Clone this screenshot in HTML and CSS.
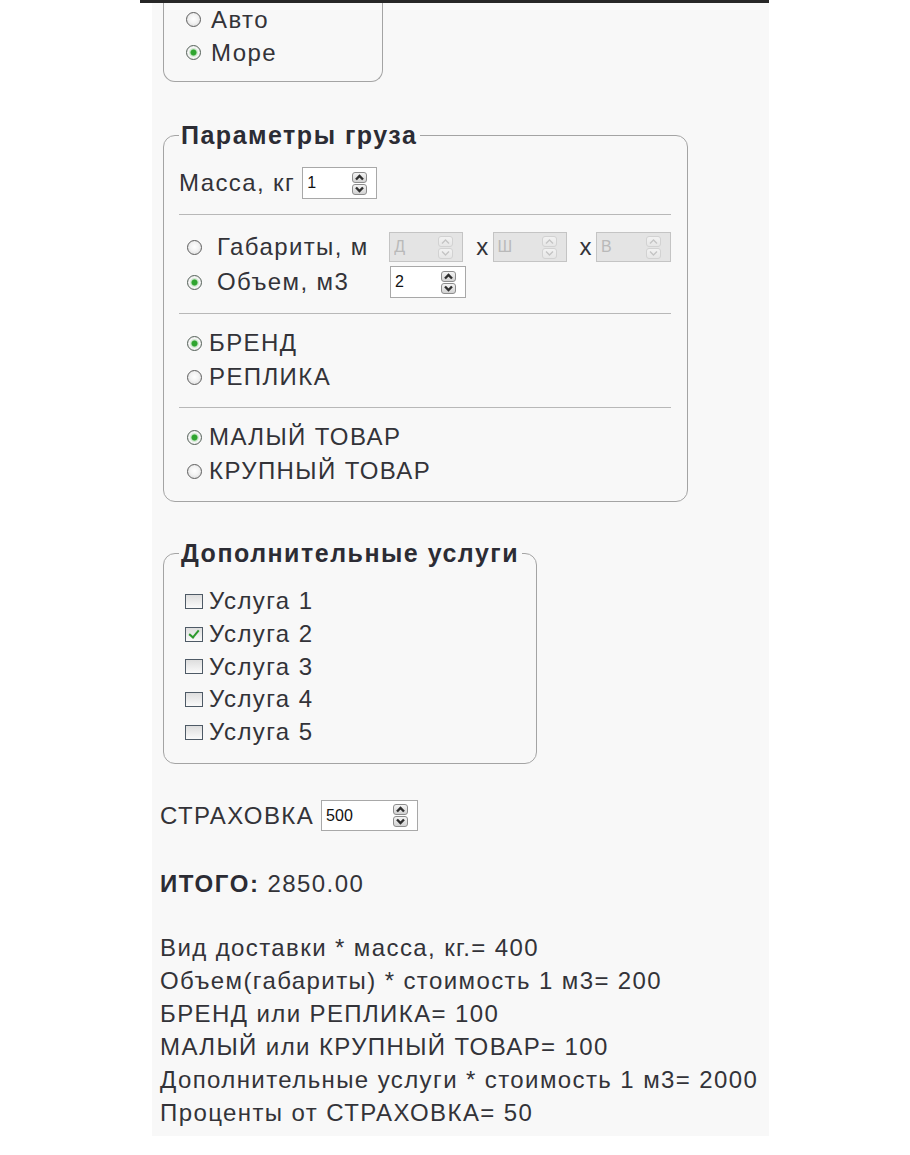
FILE: index.html
```html
<!DOCTYPE html>
<html lang="ru">
<head>
<meta charset="utf-8">
<title>Калькулятор доставки</title>
<link rel="stylesheet" href="styles.css">
</head>
<body>
<div class="frame">
  <div class="page">
    <fieldset class="fs fs-delivery">
      <label class="opt"><input type="radio" name="delivery" class="rb"><span>Авто</span></label>
      <label class="opt"><input type="radio" name="delivery" class="rb" checked><span>Море</span></label>
    </fieldset>

    <fieldset class="fs fs-cargo">
      <legend>Параметры груза</legend>
      <div class="sec sec-mass">
        <label class="row">Масса, кг
          <span class="num w75"><input type="text" value="1"><span class="spin"><span class="sb"><svg viewBox="0 0 13 9"><polyline points="3,6.5 6.5,3 10,6.5"/></svg></span><span class="sb"><svg viewBox="0 0 13 9"><polyline points="3,2.5 6.5,6 10,2.5"/></svg></span></span></span>
        </label>
      </div>
      <hr>
      <div class="sec sec-dims">
        <div class="dim-row r1">
          <label class="opt dim-label"><input type="radio" name="vol" class="rb"><span>Габариты, м</span></label>
          <span class="num dis w74"><input type="text" placeholder="Д" disabled><span class="spin"><span class="sb"><svg viewBox="0 0 13 9"><polyline points="3,6.5 6.5,3 10,6.5"/></svg></span><span class="sb"><svg viewBox="0 0 13 9"><polyline points="3,2.5 6.5,6 10,2.5"/></svg></span></span></span>
          <span class="x">x</span>
          <span class="num dis w74"><input type="text" placeholder="Ш" disabled><span class="spin"><span class="sb"><svg viewBox="0 0 13 9"><polyline points="3,6.5 6.5,3 10,6.5"/></svg></span><span class="sb"><svg viewBox="0 0 13 9"><polyline points="3,2.5 6.5,6 10,2.5"/></svg></span></span></span>
          <span class="x">x</span>
          <span class="num dis w75"><input type="text" placeholder="В" disabled><span class="spin"><span class="sb"><svg viewBox="0 0 13 9"><polyline points="3,6.5 6.5,3 10,6.5"/></svg></span><span class="sb"><svg viewBox="0 0 13 9"><polyline points="3,2.5 6.5,6 10,2.5"/></svg></span></span></span>
        </div>
        <div class="dim-row r2">
          <label class="opt dim-label"><input type="radio" name="vol" class="rb" checked><span>Объем, м3</span></label>
          <span class="num w76"><input type="text" value="2"><span class="spin"><span class="sb"><svg viewBox="0 0 13 9"><polyline points="3,6.5 6.5,3 10,6.5"/></svg></span><span class="sb"><svg viewBox="0 0 13 9"><polyline points="3,2.5 6.5,6 10,2.5"/></svg></span></span></span>
        </div>
      </div>
      <hr>
      <div class="sec sec-opts">
        <label class="opt"><input type="radio" name="brand" class="rb" checked><span>БРЕНД</span></label>
        <label class="opt"><input type="radio" name="brand" class="rb"><span>РЕПЛИКА</span></label>
      </div>
      <hr>
      <div class="sec sec-opts last">
        <label class="opt"><input type="radio" name="size" class="rb" checked><span>МАЛЫЙ ТОВАР</span></label>
        <label class="opt"><input type="radio" name="size" class="rb"><span>КРУПНЫЙ ТОВАР</span></label>
      </div>
    </fieldset>

    <fieldset class="fs fs-services">
      <legend>Дополнительные услуги</legend>
      <div class="sec sec-svc">
        <label class="opt"><input type="checkbox" class="cb"><span>Услуга 1</span></label>
        <label class="opt"><input type="checkbox" class="cb" checked><span>Услуга 2</span></label>
        <label class="opt"><input type="checkbox" class="cb"><span>Услуга 3</span></label>
        <label class="opt"><input type="checkbox" class="cb"><span>Услуга 4</span></label>
        <label class="opt"><input type="checkbox" class="cb"><span>Услуга 5</span></label>
      </div>
    </fieldset>

    <label class="row insurance">СТРАХОВКА
      <span class="num w97"><input type="text" value="500"><span class="spin"><span class="sb"><svg viewBox="0 0 13 9"><polyline points="3,6.5 6.5,3 10,6.5"/></svg></span><span class="sb"><svg viewBox="0 0 13 9"><polyline points="3,2.5 6.5,6 10,2.5"/></svg></span></span></span>
    </label>

    <p class="total"><b>ИТОГО:</b> 2850.00</p>

    <div class="breakdown">
      <div>Вид доставки * масса, кг.= 400</div>
      <div>Объем(габариты) * стоимость 1 м3= 200</div>
      <div>БРЕНД или РЕПЛИКА= 100</div>
      <div>МАЛЫЙ или КРУПНЫЙ ТОВАР= 100</div>
      <div>Дополнительные услуги * стоимость 1 м3= 2000</div>
      <div>Проценты от СТРАХОВКА= 50</div>
    </div>
  </div>
</div>
</body>
</html>
```

FILE: styles.css
```css
* { box-sizing: border-box; }

body {
  margin: 0;
  background: #ffffff;
  font-family: "Liberation Sans", Arial, sans-serif;
  color: #333338;
}

.frame {
  margin-left: 140px;
  width: 629px;
  border-top: 3px solid #262626;
}

.page {
  margin-left: 12px;
  background: #f8f8f8;
  padding: 0 8px 7px 8px;
  font-size: 24px;
  letter-spacing: 1.4px;
}

/* fieldsets */
.fs {
  margin: 0 3px;
  padding: 0 16px 0 15px;
  border: 1px solid #a4a4a4;
  border-radius: 12px;
  min-width: 0;
}

.fs legend {
  font-weight: bold;
  font-size: 25px;
  letter-spacing: 1.5px;
  line-height: 28px;
  padding: 0 3px 0 2px;
  white-space: nowrap;
  color: #2c2c34;
}

.fs-delivery {
  width: 220px;
  border-top: 0;
  border-radius: 0 0 12px 12px;
  padding-bottom: 12px;
}

.fs-delivery .opt { height: 33px; gap: 10px; }
.fs-delivery .rb { margin-left: 7px; }

.fs-cargo { width: 525px; margin-top: 39px; }
.fs-services { width: 374px; margin-top: 37px; padding-right: 8px; }

hr {
  margin: 0;
  border: 0;
  border-top: 1px solid #b8b8b8;
}

.sec-mass { padding: 18px 0 15px; }
.sec-dims { padding: 17px 0 15px; display: flex; flex-direction: column; gap: 4px; }
.sec-opts { padding: 12px 0 13px; }
.sec-svc { padding: 18px 0 15px; }

/* rows & options */
.row {
  display: flex;
  align-items: center;
  gap: 7px;
}

.opt {
  display: flex;
  align-items: center;
  gap: 7px;
  height: 34px;
}

.sec-svc .opt { height: 32.7px; gap: 6px; }

.rb {
  appearance: none;
  -webkit-appearance: none;
  margin: 0 0 0 8px;
  width: 15px;
  height: 15px;
  flex: none;
  border: 1.5px solid #5e5e5e;
  border-radius: 50%;
  background: radial-gradient(circle at 50% 45%, #ffffff 0, #f3f3f3 45%, #d2d2d2 100%);
}

.rb:checked {
  border-color: #56625a;
  background: radial-gradient(circle, #2fa52f 0 2.6px, #bfe3bf 3.4px, #f6f6f6 5px, #d8d8d8 100%);
}

.cb {
  appearance: none;
  -webkit-appearance: none;
  margin: 0 0 0 6px;
  width: 18px;
  height: 15px;
  flex: none;
  border: 1.5px solid #4e5a66;
  background: linear-gradient(#dedede, #fafafa);
  display: grid;
  place-content: center;
}

.cb:checked::before {
  content: "";
  width: 4px;
  height: 8px;
  margin-top: -2px;
  border-right: 2px solid #2e9a2e;
  border-bottom: 2px solid #2e9a2e;
  transform: rotate(40deg);
}

/* dimensions */
.dim-row { display: flex; align-items: center; }
.dim-row.r1 { height: 30px; }
.dim-row.r2 { height: 32px; }
.dim-label { width: 211px; gap: 15px; height: auto; }
.x { margin: 0 3px 0 13px; }

/* number inputs with spinner */
.num {
  display: inline-flex;
  align-items: center;
  height: 32px;
  border: 1px solid #a8a8a8;
  background: #ffffff;
  padding-right: 9px;
  letter-spacing: 0;
}

.dim-row .num { height: 30px; }
.dim-row.r2 .num { height: 32px; }
.insurance .num { height: 31px; }

.w74 { width: 74px; }
.w75 { width: 75px; }
.w76 { width: 76px; }
.w97 { width: 97px; }

.num input {
  flex: 1;
  min-width: 0;
  border: 0;
  background: transparent;
  font-family: "Liberation Sans", Arial, sans-serif;
  font-size: 16px;
  color: #111;
  padding: 0 0 0 4px;
  outline: none;
}

.num input::placeholder { color: #b9b9b9; }

.spin {
  display: flex;
  flex-direction: column;
  gap: 1px;
  flex: none;
}

.sb {
  display: block;
  width: 15px;
  height: 11px;
  border: 1px solid #8d8d8d;
  border-radius: 3px;
  background: linear-gradient(#f4f4f4, #d2d2d2);
}

.sb svg {
  display: block;
  width: 13px;
  height: 9px;
}

.sb polyline {
  fill: none;
  stroke: #2f2f2f;
  stroke-width: 2.4;
}

.num.dis {
  background: #e4e4e4;
  border-color: #c4c4c4;
}

.num.dis .sb {
  border-color: #d2d2d2;
  background: linear-gradient(#f2f2f2, #e6e6e6);
}

.num.dis .sb polyline { stroke: #c4c4c4; stroke-width: 1.4; }

/* bottom */
.insurance { margin-top: 36px; height: 31px; }

.total {
  margin: 35.5px 0 0;
  line-height: 33px;
}

.total b { color: #2c2c34; letter-spacing: 1.6px; }

.breakdown {
  margin-top: 31px;
  line-height: 33px;
}
```
